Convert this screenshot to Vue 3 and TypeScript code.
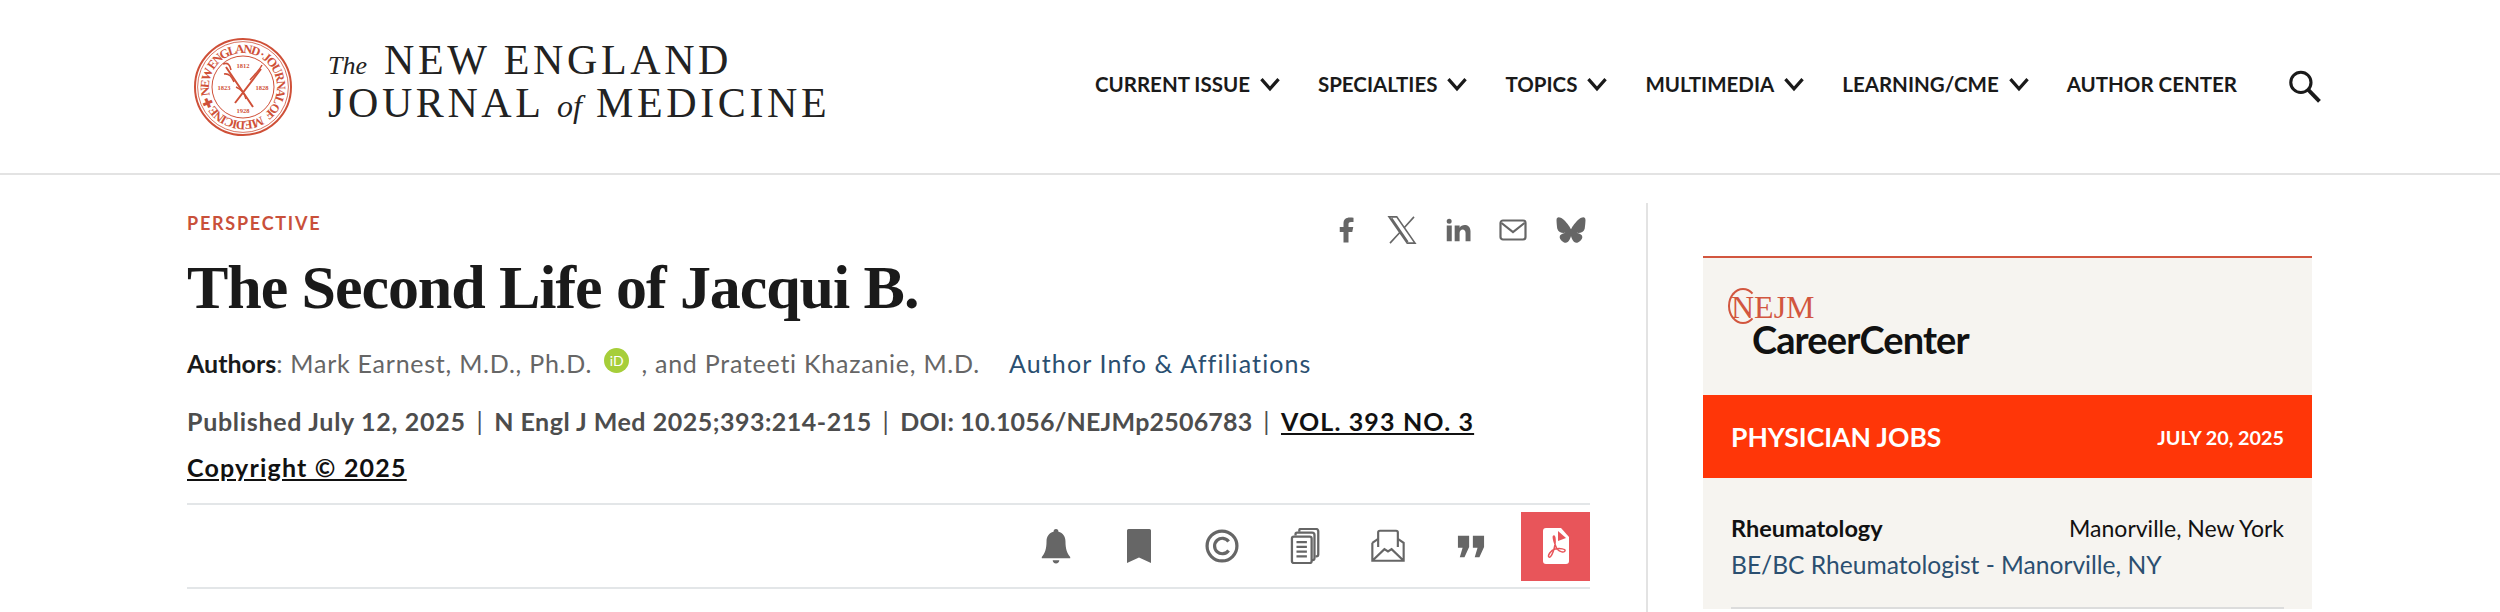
<script setup lang="ts">
// NEJM article page header: masthead, article meta column, career center rail.
const navItems = [
  { label: "CURRENT ISSUE", menu: true },
  { label: "SPECIALTIES", menu: true },
  { label: "TOPICS", menu: true },
  { label: "MULTIMEDIA", menu: true },
  { label: "LEARNING/CME", menu: true },
  { label: "AUTHOR CENTER", menu: false },
];
</script>

<template>
  <div class="page">
    <header class="masthead">
      <a class="brand">
        <svg class="seal" viewBox="0 0 100 100" aria-hidden="true">
          <defs>
            <path id="seal-ring" d="M50 50m-34 0a34 34 0 1 1 68 0a34 34 0 1 1-68 0" transform="rotate(-122 50 50)" />
          </defs>
          <circle cx="50" cy="50" r="48" fill="none" stroke="#cf5038" stroke-width="2" />
          <circle cx="50" cy="50" r="45.400" fill="none" stroke="#cf5038" stroke-width=".8" />
          <circle cx="50" cy="50" r="31" fill="none" stroke="#cf5038" stroke-width="1" />
          <text class="seal-ring"><textPath href="#seal-ring" textLength="210">MEDICINE ✚ NEW ENGLAND · JOURNAL OF</textPath></text>
          <text class="seal-year" x="50" y="31" text-anchor="middle">1812</text>
          <text class="seal-year" x="31" y="53" text-anchor="middle">1823</text>
          <text class="seal-year" x="69" y="53" text-anchor="middle">1828</text>
          <text class="seal-year" x="50" y="76" text-anchor="middle">1928</text>
          <path d="M33 30 60 70M42 66 68 32" fill="none" stroke="#cf5038" stroke-width="2" />
          <path d="M30 27c5-2 7 1 8 6M31 37c6-1 8 4 10 8M69 28c-3 6-8 10-12 15M43 50c5 2 9 7 10 12" fill="none" stroke="#cf5038" stroke-width="1.500" />
        </svg>
        <div class="wordmark">
          <div class="wordmark-line"><i class="the">The</i> NEW ENGLAND</div>
          <div class="wordmark-line">JOURNAL <i class="of">of</i> MEDICINE</div>
        </div>
      </a>
      <nav class="main-nav">
        <a v-for="item in navItems" :key="item.label" class="nav-item">
          {{ item.label }}
          <svg v-if="item.menu" class="chevron" viewBox="0 0 20 14" aria-hidden="true">
            <path d="M2 2l8 9 8-9" fill="none" stroke="#1a1a1a" stroke-width="3" />
          </svg>
        </a>
        <svg class="search" viewBox="0 0 32 32" aria-hidden="true">
          <circle cx="12.500" cy="12" r="9.800" fill="none" stroke="#1a1a1a" stroke-width="3" />
          <path d="M19.500 19 30.500 30.500" stroke="#1a1a1a" stroke-width="3.800" />
        </svg>
      </nav>
    </header>

    <main class="content">
      <article class="article">
        <div class="kicker-row">
          <span class="kicker">PERSPECTIVE</span>
          <div class="share">
            <svg viewBox="0 0 24 24" class="share-icon"><path d="M14 13.500h3l.8-4H14v-2c0-1.030.3-2 2-2h2V2.140C17.700 2.100 16.400 2 15.100 2 11.900 2 10 3.660 10 6.700v2.800H7v4h3V22h4z" /></svg>
            <svg viewBox="0 0 24 24" class="share-icon x"><path d="M1.600 1.500h6.200L22.400 22.500h-6.200zM21.600 1.500 13.400 10.600M10.600 13.600 2.400 22.500M3.700 2.500l13 19" /></svg>
            <svg viewBox="0 0 24 24" class="share-icon"><path d="M6.940 5a2 2 0 1 1-4 0 2 2 0 0 1 4 0zM7 8.480H3V21h4zm6.320 0H9.340V21h3.940v-6.570c0-3.660 4.770-4 4.770 0V21H22v-7.930c0-6.170-7.060-5.940-8.720-2.910z" /></svg>
            <svg viewBox="0 0 28 22" class="share-icon mail"><rect x="1.500" y="1.500" width="25" height="19" rx="2.500" fill="none" stroke="#666" stroke-width="2.200" /><path d="M2.500 4l11.500 9 11.500-9" fill="none" stroke="#666" stroke-width="2.200" /></svg>
            <svg viewBox="0 0 600 530" class="share-icon"><path d="m135.700 44c66.500 50 138 151.100 164.300 205.500 26.300-54.300 97.800-155.500 164.300-205.500 48-36 125.700-63.900 125.700 24.800 0 17.700-10.200 148.800-16.100 170.100-20.700 74-96.100 92.800-163.200 81.400 117.300 20 147.100 86.100 82.700 152.200-122.400 125.600-175.900-31.500-189.600-71.800-2.500-7.400-3.700-10.800-3.700-7.900 0-2.900-1.200.5-3.700 7.900-13.700 40.300-67.200 197.400-189.600 71.800-64.400-66.100-34.600-132.300 82.700-152.200-67.100 11.400-142.500-7.400-163.200-81.400-6-21.300-16.100-152.400-16.100-170.100 0-88.700 77.700-60.800 125.700-24.800z" /></svg>
          </div>
        </div>
        <h1 class="title">The Second Life of Jacqui B.</h1>
        <p class="authors">
          <b>Authors</b>: Mark Earnest, M.D., Ph.D.
          <span class="orcid">iD</span>
          , and Prateeti Khazanie, M.D.
          <a class="affil">Author Info &amp; Affiliations</a>
        </p>
        <p class="meta">
          Published July 12, 2025 <span class="bar">|</span> <span class="meta-cite">N Engl J Med 2025;393:214-215</span> <span class="bar">|</span> <span class="meta-doi">DOI: 10.1056/NEJMp2506783</span> <span class="bar">|</span> <a class="meta-link meta-vol">VOL. 393 NO. 3</a>
        </p>
        <p class="meta meta-copy"><a class="meta-link">Copyright © 2025</a></p>
        <div class="toolbar">
          <button class="tool">
            <svg viewBox="0 0 32 38" class="tool-icon"><path d="M16 1c1.700 0 2.600 1.200 2.600 3 4.800 1.300 7.400 5 7.400 10 0 8 1.500 12.500 5 16.500v1.500H1v-1.500c3.500-4 5-8.500 5-16.500 0-5 2.600-8.700 7.400-10 0-1.800.9-3 2.600-3zM12.500 34h7c0 2-1.500 3.500-3.500 3.500s-3.500-1.500-3.500-3.500z" /></svg>
          </button>
          <button class="tool">
            <svg viewBox="0 0 26 36" class="tool-icon bookmark"><path d="M2.500 1h21A1.500 1.500 0 0 1 25 2.500V35l-12-5.500L1 35V2.500A1.500 1.500 0 0 1 2.500 1z" /></svg>
          </button>
          <button class="tool">
            <svg viewBox="0 0 36 36" class="tool-icon lined"><circle cx="18" cy="18" r="15.800" stroke-width="3.400" /><path d="M25 13.200a8.200 8.200 0 1 0 0 9.600" stroke-width="3.400" /></svg>
          </button>
          <button class="tool">
            <svg viewBox="0 0 30 38" class="tool-icon lined thin"><path d="M9 4V2.500A1.500 1.500 0 0 1 10.500 1h16A2.500 2.500 0 0 1 29 3.500V28a2 2 0 0 1-2 2h-1" /><path d="M5 8V6.500A1.500 1.500 0 0 1 6.500 5h16A2.500 2.500 0 0 1 25 7.500V32a2 2 0 0 1-2 2h-1" /><rect x="1.200" y="9" width="20.800" height="28" rx="2" /><path d="M6 15h11M6 20h11M6 25h11M6 30h11" /></svg>
          </button>
          <button class="tool">
            <svg viewBox="0 0 38 36" class="tool-icon lined thin"><path d="M1.500 14.500V34.500h35V14.500L30 10M8 10l-6.500 4.500M1.500 34.500 15 21.500l4 2.500 4-2.500 13.500 13" /><path d="M8 19V3a2 2 0 0 1 2-2h18a2 2 0 0 1 2 2v16" /></svg>
          </button>
          <button class="tool">
            <svg viewBox="0 0 30 24" class="tool-icon quote"><path d="M1 1h12v12l-5 11H3l3-10H1zM17 1h12v12l-5 11h-5l3-10h-5z" /></svg>
          </button>
          <button class="tool tool-pdf">
            <svg viewBox="0 0 26 36" class="pdf-icon">
              <path d="M3 0h15l8 9v24a3 3 0 0 1-3 3H3a3 3 0 0 1-3-3V3a3 3 0 0 1 3-3z" fill="#fff" />
              <path d="M15 3l8 7-8 3z" fill="#e8555a" />
              <path d="M11 8c-2 0 1 9 3 13 3 3 7 4 8 2s-5-3-10-2c-4 1-8 7-6 8 2 2 7-10 6-18-.2-2-.5-3-1-3z" fill="none" stroke="#e8555a" stroke-width="1.500" />
            </svg>
          </button>
        </div>
      </article>

      <aside class="rail">
        <section class="career">
          <div class="career-logo">
            <div class="career-nejm"><span class="career-n">N</span>EJM</div>
            <div class="career-name">CareerCenter</div>
          </div>
          <div class="jobs-bar">
            <span class="jobs-title">PHYSICIAN JOBS</span>
            <span class="jobs-date">JULY 20, 2025</span>
          </div>
          <div class="job">
            <div class="job-top">
              <b>Rheumatology</b>
              <span>Manorville, New York</span>
            </div>
            <a class="job-link">BE/BC Rheumatologist - Manorville, NY</a>
          </div>
        </section>
      </aside>
    </main>
  </div>
</template>

<style>
html,
body {
  margin: 0;
  background: #fff;
  overflow: hidden;
}
</style>

<style scoped>
.page {
  width: 2500px;
  height: 612px;
  overflow: hidden;
  font-family: Lato, "Open Sans", sans-serif;
  color: #1a1a1a;
}

.masthead {
  height: 175px;
  box-sizing: border-box;
  border-bottom: 2px solid #e3e3e3;
  display: flex;
  align-items: center;
  justify-content: space-between;
  padding: 0 179px 0 193px;
}
.brand {
  display: flex;
  align-items: center;
  gap: 35px;
}
.seal {
  width: 100px;
  height: 100px;
}
.seal-ring {
  font: 700 12.500px "Liberation Serif", serif;
  fill: #cf5038;
}
.seal-year {
  font: 700 6.500px "Liberation Serif", serif;
  fill: #cf5038;
}
.wordmark {
  margin-bottom: 9px;
  font-family: "Liberation Serif", serif;
  font-size: 42px;
  letter-spacing: 3.600px;
  color: #222;
}
.wordmark-line {
  height: 43px;
  line-height: 43px;
  white-space: nowrap;
}
.wordmark .the {
  font-size: 26px;
  letter-spacing: 0;
  margin-right: 3px;
}
.wordmark .of {
  font-size: 32px;
  letter-spacing: 0;
}

.main-nav {
  display: flex;
  align-items: center;
  gap: 37px;
}
.nav-item {
  display: flex;
  align-items: center;
  gap: 9px;
  margin-bottom: 5px;
  font-size: 20.500px;
  font-weight: 700;
}
.chevron {
  width: 22px;
  height: 15px;
}
.search {
  width: 33px;
  height: 33px;
  margin-left: 14px;
}

.content {
  display: flex;
  padding-left: 187px;
}
.article {
  width: 1403px;
  padding-top: 37px;
}
.kicker-row {
  display: flex;
  justify-content: space-between;
  align-items: flex-start;
  height: 39px;
}
.kicker {
  font-size: 18px;
  font-weight: 700;
  letter-spacing: 1.750px;
  color: #c9503a;
}
.share {
  display: flex;
  align-items: center;
  gap: 26px;
  margin-right: 4px;
  margin-top: 3px;
}
.share-icon {
  width: 30px;
  height: 30px;
  fill: #666;
}
.share-icon.x {
  fill: none;
  stroke: #666;
  stroke-width: 1.300;
}
.share-icon.mail {
  width: 28px;
  margin-right: 3px;
}
.title {
  margin: 0;
  font-family: "Liberation Serif", serif;
  font-size: 62px;
  line-height: 72px;
  font-weight: 700;
  letter-spacing: -1.070px;
  color: #1a1a1a;
}
.authors {
  margin: 23px 0 0;
  font-size: 25px;
  line-height: 34px;
  letter-spacing: .750px;
  color: #666;
}
.authors b {
  color: #1a1a1a;
  letter-spacing: 0;
}
.orcid {
  display: inline-block;
  width: 25px;
  height: 25px;
  margin: 0 5px;
  border-radius: 50%;
  background: #a6ce39;
  color: #fff;
  font-size: 14px;
  line-height: 25px;
  letter-spacing: 0;
  text-align: center;
  vertical-align: 7px;
}
.affil {
  margin-left: 22px;
  letter-spacing: 1.120px;
  color: #2b4f70;
}
.meta {
  margin: 24px 0 0;
  font-size: 25px;
  line-height: 34px;
  font-weight: 700;
  letter-spacing: .700px;
  color: #4d4d4d;
}
.meta-cite {
  letter-spacing: .500px;
}
.meta-doi {
  letter-spacing: .200px;
}
.meta-copy {
  margin-top: 12px;
  letter-spacing: 1.200px;
}
.bar {
  margin: 0 4px;
  font-weight: 400;
}
.meta-link {
  color: #111;
  text-decoration: underline;
}
.meta-vol {
  letter-spacing: 1.150px;
}

.toolbar {
  margin-top: 19px;
  height: 86px;
  box-sizing: border-box;
  border-top: 2px solid #e3e6e8;
  border-bottom: 2px solid #e3e6e8;
  display: flex;
  justify-content: flex-end;
  align-items: center;
}
.tool {
  width: 83px;
  height: 69px;
  padding: 0;
  border: 0;
  background: none;
  display: flex;
  align-items: center;
  justify-content: center;
}
.tool-icon {
  width: 34px;
  height: 36px;
  fill: #666;
}
.tool-icon.lined {
  fill: none;
  stroke: #666;
}
.tool-icon.thin {
  stroke-width: 2.400;
}
.tool-icon.bookmark {
  width: 26px;
}
.tool-icon.quote {
  width: 28px;
  height: 24px;
}
.tool-pdf {
  width: 69px;
  margin-left: 9px;
  background: #e8555a;
}
.pdf-icon {
  width: 26px;
  height: 36px;
}

.rail {
  margin-left: 56px;
  padding-left: 55px;
  padding-top: 53px;
  border-left: 2px solid #e3e3e3;
  margin-top: 28px;
  height: 500px;
}
.career {
  width: 609px;
  border-top: 2px solid #d2563f;
  background: #f6f4f0;
}
.career-logo {
  height: 137px;
  box-sizing: border-box;
  padding: 33px 0 0 28px;
}
.career-nejm {
  font-family: "Liberation Serif", serif;
  font-size: 32px;
  line-height: 32px;
  color: #d2563f;
}
.career-n {
  position: relative;
}
.career-n::before {
  content: "";
  position: absolute;
  left: -3px;
  top: -1px;
  width: 30px;
  height: 36px;
  box-sizing: border-box;
  border: 2px solid #d2563f;
  border-right-color: transparent;
  border-radius: 50%;
}
.career-name {
  margin: -3px 0 0 21px;
  font-size: 38px;
  line-height: 38px;
  font-weight: 700;
  letter-spacing: -.900px;
  color: #111;
}
.jobs-bar {
  height: 83px;
  background: #ff3608;
  color: #fff;
  display: flex;
  align-items: center;
  justify-content: space-between;
  padding: 0 28px;
  font-weight: 700;
}
.jobs-title {
  font-size: 26.500px;
}
.jobs-date {
  font-size: 19.800px;
}
.job {
  margin: 0 28px;
  padding: 32px 0 23px;
  font-size: 24.600px;
  line-height: 38px;
  border-bottom: 2px solid #dcdcdc;
}
.job-top {
  display: flex;
  justify-content: space-between;
  line-height: 36px;
  font-size: 23.500px;
  color: #111;
}
.job-top span {
  font-size: 23px;
}
.job-link {
  color: #2b4f70;
}
</style>
